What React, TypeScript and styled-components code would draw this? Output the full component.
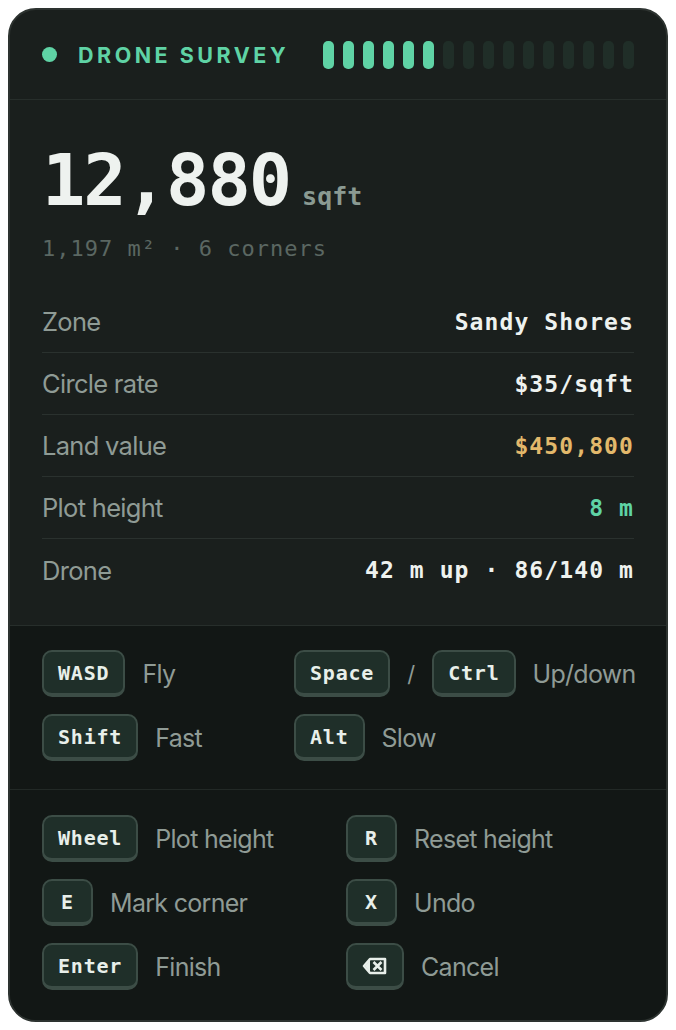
import * as React from "react";
import styled, { createGlobalStyle } from "styled-components";

const GlobalStyle = createGlobalStyle`
  html, body {
    margin: 0;
    padding: 0;
    background: #ffffff;
  }
  body {
    padding: 8px;
  }
`;

const MONO = `"DejaVu Sans Mono", "Liberation Mono", monospace`;
const SANS = `Inter, "Noto Sans", sans-serif`;

const Card = styled.div`
  width: 660px;
  height: 1014px;
  box-sizing: border-box;
  border: 2px solid #2d3330;
  border-radius: 28px;
  overflow: hidden;
  background: #1a1f1d;
  display: flex;
  flex-direction: column;
`;

const Header = styled.div`
  height: 90px;
  box-sizing: border-box;
  padding: 0 32px;
  display: flex;
  align-items: center;
  justify-content: space-between;
  border-bottom: 1px solid #272e2b;
`;

const Title = styled.div`
  display: flex;
  align-items: center;
  gap: 21px;
  font-family: ${SANS};
  font-weight: 700;
  font-size: 21.5px;
  letter-spacing: 3.5px;
  color: #5fd3a5;
`;

const Dot = styled.span`
  width: 15px;
  height: 15px;
  border-radius: 50%;
  background: #5fd3a5;
`;

const Meter = styled.div`
  display: flex;
  gap: 9px;
`;

const Bar = styled.span<{ $on: boolean }>`
  width: 11px;
  height: 28px;
  border-radius: 5px;
  background: ${p => (p.$on ? "#5fd3a5" : "#202e28")};
`;

const Stats = styled.div`
  padding: 44px 32px 24px 32px;
  border-bottom: 1px solid #272e2b;
`;

const Area = styled.div`
  display: flex;
  align-items: baseline;
  gap: 12px;
  font-family: ${MONO};
  line-height: 1;
`;

const AreaValue = styled.span`
  font-size: 72px;
  font-weight: 700;
  letter-spacing: -2px;
  color: #eef2ef;
`;

const AreaUnit = styled.span`
  font-size: 25px;
  font-weight: 700;
  color: #8a9a92;
`;

const SubLine = styled.div`
  margin-top: 20px;
  font-family: ${MONO};
  font-size: 22px;
  letter-spacing: 1px;
  color: #5b6762;
`;

const Rows = styled.div`
  margin-top: 30px;
  display: flex;
  flex-direction: column;
`;

const Row = styled.div`
  height: 62px;
  box-sizing: border-box;
  display: flex;
  align-items: center;
  justify-content: space-between;
  border-bottom: 1px solid #2a312e;

  &:last-child {
    border-bottom: none;
  }
`;

const Label = styled.span`
  font-family: ${SANS};
  font-size: 25.5px;
  letter-spacing: -0.7px;
  color: #8f9b95;
`;

const Value = styled.span<{ $tone?: "gold" | "green" }>`
  font-family: ${MONO};
  font-weight: 700;
  font-size: 23px;
  letter-spacing: 1.1px;
  color: ${p =>
    p.$tone === "gold" ? "#e2b86b" : p.$tone === "green" ? "#5fd3a5" : "#eef2ef"};
`;

const Keys = styled.div<{ $cols: string }>`
  background: #121715;
  padding: 24px 32px 28px 32px;
  display: grid;
  grid-template-columns: ${p => p.$cols};
  row-gap: 17px;
  border-bottom: 1px solid #222926;

  &:last-child {
    border-bottom: none;
    flex: 1;
    padding-top: 25px;
    align-content: start;
  }
`;

const Binding = styled.div`
  display: flex;
  align-items: center;
  gap: 17px;
`;

const Key = styled.span`
  min-width: 51px;
  height: 47px;
  box-sizing: border-box;
  padding: 0 14px;
  display: inline-flex;
  align-items: center;
  justify-content: center;
  border: 2px solid #3c4d46;
  border-bottom-width: 4px;
  border-radius: 10px;
  background: #1f2f29;
  font-family: ${MONO};
  font-weight: 700;
  font-size: 20px;
  letter-spacing: 0.8px;
  color: #e8efea;
`;

const KeyText = styled.span`
  font-family: ${SANS};
  font-size: 25px;
  letter-spacing: -0.7px;
  color: #8f9b95;
`;

const Slash = styled.span`
  font-family: ${SANS};
  font-size: 22px;
  color: #8f9b95;
`;

function BackspaceIcon() {
  return (
    <svg width="26" height="18" viewBox="0 0 26 18">
      <path
        d="M8 2 H23 V16 H8 L2 9 Z"
        fill="none"
        stroke="#e8efea"
        strokeWidth="2.6"
        strokeLinejoin="round"
      />
      <path d="M3 9 L8 3 V15 Z" fill="#e8efea" />
      <path
        d="M11.5 5 L19.5 13 M19.5 5 L11.5 13"
        stroke="#e8efea"
        strokeWidth="2.6"
      />
    </svg>
  );
}

const stats = [
  { label: "Zone", value: "Sandy Shores" },
  { label: "Circle rate", value: "$35/sqft" },
  { label: "Land value", value: "$450,800", tone: "gold" as const },
  { label: "Plot height", value: "8 m", tone: "green" as const },
  { label: "Drone", value: "42 m up · 86/140 m" },
];

export default function App() {
  return (
    <>
      <GlobalStyle />
      <Card>
        <Header>
          <Title>
            <Dot />
            DRONE SURVEY
          </Title>
          <Meter>
            {Array.from({ length: 16 }).map((_, i) => (
              <Bar key={i} $on={i < 6} />
            ))}
          </Meter>
        </Header>
        <Stats>
          <Area>
            <AreaValue>12,880</AreaValue>
            <AreaUnit>sqft</AreaUnit>
          </Area>
          <SubLine>1,197 m² · 6 corners</SubLine>
          <Rows>
            {stats.map(s => (
              <Row key={s.label}>
                <Label>{s.label}</Label>
                <Value $tone={s.tone}>{s.value}</Value>
              </Row>
            ))}
          </Rows>
        </Stats>
        <Keys $cols="252px 1fr">
          <Binding>
            <Key>WASD</Key>
            <KeyText>Fly</KeyText>
          </Binding>
          <Binding>
            <Key>Space</Key>
            <Slash>/</Slash>
            <Key>Ctrl</Key>
            <KeyText>Up/down</KeyText>
          </Binding>
          <Binding>
            <Key>Shift</Key>
            <KeyText>Fast</KeyText>
          </Binding>
          <Binding>
            <Key>Alt</Key>
            <KeyText>Slow</KeyText>
          </Binding>
        </Keys>
        <Keys $cols="304px 1fr">
          <Binding>
            <Key>Wheel</Key>
            <KeyText>Plot height</KeyText>
          </Binding>
          <Binding>
            <Key>R</Key>
            <KeyText>Reset height</KeyText>
          </Binding>
          <Binding>
            <Key>E</Key>
            <KeyText>Mark corner</KeyText>
          </Binding>
          <Binding>
            <Key>X</Key>
            <KeyText>Undo</KeyText>
          </Binding>
          <Binding>
            <Key>Enter</Key>
            <KeyText>Finish</KeyText>
          </Binding>
          <Binding>
            <Key>
              <BackspaceIcon />
            </Key>
            <KeyText>Cancel</KeyText>
          </Binding>
        </Keys>
      </Card>
    </>
  );
}
